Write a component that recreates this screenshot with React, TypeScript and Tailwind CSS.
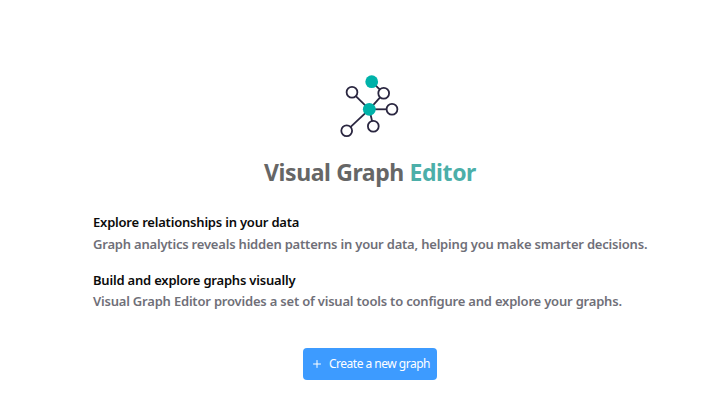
import { Plus } from "lucide-react";

function GraphLogo() {
  return (
    <svg width="63" height="70" viewBox="-3 0 63 70" fill="none" className="block">
      <g stroke="#2a2640" strokeWidth="1.8">
        <line x1="27.3" y1="39.3" x2="10" y2="22.3" />
        <line x1="27.3" y1="39.3" x2="41.7" y2="23.3" />
        <line x1="27.3" y1="39.3" x2="50" y2="39.3" />
        <line x1="27.3" y1="39.3" x2="31.3" y2="56.3" />
        <line x1="27.3" y1="39.3" x2="4.7" y2="60.7" />
        <line x1="29.7" y1="11.7" x2="41.7" y2="23.3" />
        <circle cx="10" cy="22.3" r="5.4" fill="#fff" />
        <circle cx="41.7" cy="23.3" r="5.4" fill="#fff" />
        <circle cx="50" cy="39.3" r="5.4" fill="#fff" />
        <circle cx="31.3" cy="56.3" r="5.4" fill="#fff" />
        <circle cx="4.7" cy="60.7" r="5.4" fill="#fff" />
      </g>
      <circle cx="29.7" cy="11.7" r="6.4" fill="#00b2a9" />
      <circle cx="27.3" cy="39.3" r="6.4" fill="#00b2a9" />
    </svg>
  );
}

export default function App() {
  return (
    <div className="w-[708px] h-[412px] bg-white flex flex-col items-center pl-[32px] font-['Noto_Sans','Open_Sans',sans-serif] overflow-hidden">
      <div className="pt-[70px] pl-[1px]">
        <GraphLogo />
      </div>
      <h1 className="mt-[16px] text-[23px] leading-[32px] font-bold tracking-[-0.4px] text-[#666666] whitespace-nowrap">
        Visual Graph <span className="text-[#4cafa9]">Editor</span>
      </h1>
      <div className="mt-[24px] w-[554px] tracking-[-0.2px]">
        <div className="text-[13px] leading-[20px] font-semibold text-[#0b0b0b]">
          Explore relationships in your data
        </div>
        <p className="mt-[2px] text-[13px] leading-[20px] font-semibold text-[#6f6f78] whitespace-nowrap">
          Graph analytics reveals hidden patterns in your data, helping you make smarter decisions.
        </p>
        <div className="mt-[16px] text-[13px] leading-[20px] font-semibold text-[#0b0b0b]">
          Build and explore graphs visually
        </div>
        <p className="mt-[1px] text-[13px] leading-[20px] font-semibold text-[#6f6f78] whitespace-nowrap">
          Visual Graph Editor provides a set of visual tools to configure and explore your graphs.
        </p>
      </div>
      <button className="mt-[37px] w-[134px] h-[32px] rounded-[4px] bg-[#3d9bff] text-white text-[12px] tracking-[-0.5px] flex items-center justify-center gap-[6px] pl-[1px] whitespace-nowrap">
        <Plus size={12} strokeWidth={2} />
        Create a new graph
      </button>
    </div>
  );
}
